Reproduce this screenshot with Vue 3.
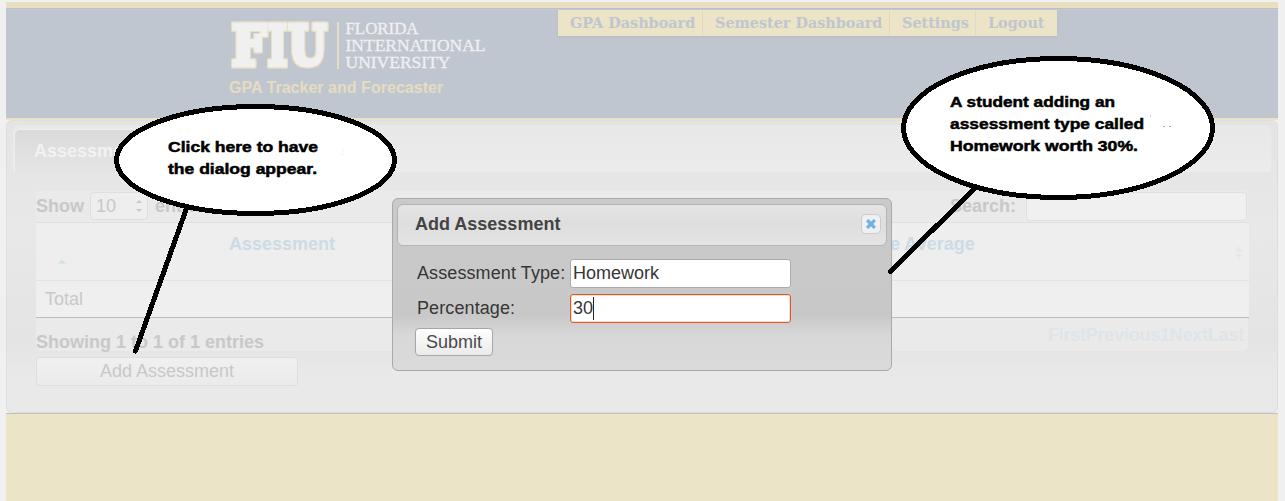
<script setup>
const nav = [
  { label: 'GPA Dashboard', cls: 'n1' },
  { label: 'Semester Dashboard', cls: 'n2' },
  { label: 'Settings', cls: 'n3' },
  { label: 'Logout', cls: 'n4' },
]
const pages = ['First', 'Previous', '1', 'Next', 'Last']
</script>

<template>
  <div class="page">
    <div class="gold-bar"></div>
    <header class="header">
      <div class="brand">
        <svg class="logo" width="262" height="54" viewBox="0 0 262 54">
          <g class="fiu">
            <text x="5" y="46" textLength="34" lengthAdjust="spacingAndGlyphs">F</text>
            <text x="41" y="46" textLength="19" lengthAdjust="spacingAndGlyphs">I</text>
            <text x="61.500" y="46" textLength="38" lengthAdjust="spacingAndGlyphs">U</text>
          </g>
          <rect x="110" y="3" width="2" height="47" fill="#e7dfc2" />
          <g class="uni">
            <text x="118.500" y="15" textLength="73" lengthAdjust="spacingAndGlyphs">FLORIDA</text>
            <text x="118.500" y="32" textLength="140" lengthAdjust="spacingAndGlyphs">INTERNATIONAL</text>
            <text x="118.500" y="49" textLength="105" lengthAdjust="spacingAndGlyphs">UNIVERSITY</text>
          </g>
        </svg>
        <div class="tagline">GPA Tracker and Forecaster</div>
      </div>
      <nav class="nav">
        <a v-for="n in nav" :key="n.label" :class="n.cls">{{ n.label }}</a>
      </nav>
    </header>

    <main class="panel">
      <div class="tabs"><div class="tab">Assessments</div></div>
      <section class="table">
        <div class="toolbar">
          <div class="show">
            <span>Show</span>
            <span class="select">10
              <svg width="8" height="14" viewBox="0 0 8 14"><path d="M1 4L4 1L7 4ZM1 10L4 13L7 10Z" fill="#c8c8c8" /></svg>
            </span>
            <span>entries</span>
          </div>
          <div class="search"><span>Search:</span><div class="search-box"></div></div>
        </div>
        <div class="thead">
          <div class="th first">Assessment
            <svg class="sort" width="8" height="5" viewBox="0 0 8 5"><path d="M0 4.500L4 0.500L8 4.500Z" fill="#d0e0e9" /></svg>
          </div>
          <div class="th last">Grade Average
            <svg class="sort" width="8" height="14" viewBox="0 0 8 14"><path d="M0 6L4 0L8 6ZM0 8L4 14L8 8Z" fill="#e8e8e8" /></svg>
          </div>
        </div>
        <div class="row">Total</div>
        <div class="tfoot">
          <span>Showing 1 to 1 of 1 entries</span>
          <div class="pages"><span v-for="p in pages" :key="p">{{ p }}</span></div>
        </div>
      </section>
      <div class="add">Add Assessment</div>
    </main>
    <footer class="footer"></footer>

    <div class="dialog">
      <div class="title">
        <span>Add Assessment</span>
        <span class="close">
          <svg width="10" height="10" viewBox="0 0 10 10"><path d="M2.200 2.200L7.800 7.800M7.800 2.200L2.200 7.800" stroke="#6fb1e2" stroke-width="3.200" stroke-linecap="square" /></svg>
        </span>
      </div>
      <div class="form">
        <label>Assessment Type:</label><div class="field">Homework</div>
        <label>Percentage:</label><div class="field focus">30<i class="caret"></i></div>
      </div>
      <div class="submit">Submit</div>
    </div>

    <svg class="notes" width="1285" height="501" viewBox="0 0 1285 501">
      <g fill="#fff" stroke="#000" stroke-width="5" stroke-linecap="round" shape-rendering="crispEdges">
        <path d="M187 207L135.500 351M976 187L890.500 271.500" />
        <ellipse cx="255.500" cy="160" rx="139" ry="53.500" />
        <ellipse cx="1058" cy="128" rx="154.500" ry="69.500" />
      </g>
      <g class="note-text">
        <text x="168" y="152" textLength="150" lengthAdjust="spacingAndGlyphs">Click here to have</text>
        <text x="168" y="174" textLength="149" lengthAdjust="spacingAndGlyphs">the dialog appear.</text>
        <text x="950" y="107" textLength="165" lengthAdjust="spacingAndGlyphs">A student adding an</text>
        <text x="950" y="129" textLength="194" lengthAdjust="spacingAndGlyphs">assessment type called</text>
        <text x="950" y="151" textLength="188" lengthAdjust="spacingAndGlyphs">Homework worth 30%.</text>
      </g>
      <path d="M1163 126.500h2M1169 126.500h2M1150 115.500h1" stroke="#aaa" />
      <path d="M342 150.500h2M341 154.500h2" stroke="#eee" />
    </svg>
  </div>
</template>

<style>
body { background: #f0f0f0; overflow: hidden; }
</style>
<style scoped>
* { box-sizing: border-box; }
.page { position: relative; width: 1285px; height: 501px; padding: 2px 7px 0 6px; overflow: hidden; display: flex; flex-direction: column; background: #f0f0f0; font: 18px/20px "Liberation Sans", Arial, sans-serif; color: #c8c8c8; }
.gold-bar { height: 6px; background: #e8dfc0; flex: none; }
.header { height: 112px; flex: none; display: flex; align-items: flex-start; border-top: 1px solid #b9bfca; border-bottom: 2px solid #ece3c5; background: #c0c6cf; box-shadow: inset 0 1px #c8cbd2; }
.brand { width: 552px; padding: 10px 0 0 221px; }
.logo { display: block; }
.fiu { font: bold 54px "DejaVu Serif", serif; fill: #f0f0f0; stroke: #f0f0f0; stroke-width: 4.500; stroke-linejoin: miter; filter: drop-shadow(1px 0 0 #e7dfc2) drop-shadow(-1px 0 0 #e7dfc2) drop-shadow(0 1px 0 #e7dfc2) drop-shadow(0 -1px 0 #e7dfc2); }
.uni { font: 17.500px "Liberation Serif", serif; fill: #f0f0f0; stroke: #f0f0f0; stroke-width: .3; }
.tagline { padding-left: 2px; margin-top: 6px; font-size: 16px; line-height: 18px; font-weight: bold; letter-spacing: .03px; color: #e5dcc1; white-space: nowrap; }
.nav { display: flex; height: 26px; margin-top: 1px; background: #ebe4c6; box-shadow: 0 1px 2px #b4b9c1; font: bold 14.400px/26px "DejaVu Serif", serif; color: #c0c6ce; }
.nav a { padding-left: 12px; border-right: 1px solid #e2dac0; white-space: nowrap; }
.nav .n1 { width: 145px; }
.nav .n2 { width: 187px; }
.nav .n3 { width: 86px; }
.nav .n4 { width: 81px; border: 0; }
.panel { height: 293px; flex: none; padding: 4px 5px; border: 1px solid #dedee0; border-radius: 6px; background: linear-gradient(#e4e4e4 0, #e8e8e8 110px, #e4e4e4 220px, #e9e9e9 255px); }
.tabs { height: 48px; padding: 3px 0 0 1px; border: 1px solid #e7e7e7; border-radius: 6px; background: linear-gradient(#e8e8e8, #eaeaea 60%, #ececec); }
.tab { width: 140px; height: 44px; padding: 11px 0 0 19px; border: 1px solid #eee; border-bottom: 0; border-radius: 6px 6px 0 0; background: linear-gradient(#dadada, #e5e5e5); color: #f2f2f2; font-weight: bold; }
.table { width: 1213px; margin: 17px 0 0 24px; }
.toolbar { height: 33px; display: flex; justify-content: space-between; border: 1px solid #e8e8e8; border-left-width: 0; border-bottom-color: #e0e0e0; border-radius: 6px 6px 0 0; background: #eaeaea; font-weight: bold; }
.show, .search { display: flex; align-items: center; height: 30px; }
.select { display: flex; align-items: center; justify-content: space-between; width: 58px; height: 28px; margin: 0 7px 0 6px; padding: 0 4px 0 5px; border: 1px solid #dfdfdf; border-radius: 4px; background: #eee; font-weight: normal; }
.search { gap: 10px; }
.search-box { width: 221px; height: 29px; border: 1px solid #dfdfdf; border-radius: 4px; background: #f0f0f0; margin-right: 1px; }
.thead { height: 58px; display: flex; border-bottom: 1px solid #e2e2e2; background: #eee; color: #ccdbe5; font-weight: bold; }
.th { position: relative; padding-top: 11px; text-align: center; }
.first { width: 492px; }
.last { width: 721px; text-align: left; padding-left: 320px; }
.sort { position: absolute; left: 22px; top: 36px; }
.last .sort { left: auto; right: 6px; top: 23px; }
.row { height: 37px; padding: 8px 9px; border-bottom: 1px solid #bdbdbd; background: #efefef; }
.tfoot { height: 34px; display: flex; justify-content: space-between; padding: 14px 4px 0 0; border: 1px solid #e5e5e5; border-width: 0 1px 1px 0; border-radius: 0 0 6px 6px; background: #eaeaea; font-weight: bold; }
.pages { display: flex; margin-top: -7px; letter-spacing: -.23px; color: #dfe4e8; }
.add { width: 262px; height: 29px; margin: 5px 0 0 24px; line-height: 27px; text-align: center; border: 1px solid #dedede; border-radius: 4px; background: linear-gradient(#f0f0f0, #ebebeb); }
.footer { flex: 1; border-top: 1px solid #c0c0c2; background: #ebe4c7; }
.dialog { position: absolute; left: 392px; top: 198px; width: 500px; height: 173px; padding: 5px 4px; border: 1px solid #a9a9a9; border-radius: 6px; background: linear-gradient(#cacaca 0, #c8c8c8 116px, #d8d8d8 137px, #dadada); color: #363636; }
.title { display: flex; height: 42px; align-items: center; justify-content: space-between; padding: 0 5px 2px 17px; border: 1px solid #b4b4b4; border-radius: 6px; background: linear-gradient(#e4e4e4, #dedede 50%, #e4e4e4); font-weight: bold; color: #444; }
.close { display: flex; align-items: center; justify-content: center; width: 20px; height: 20px; border: 1px solid #ccc; border-radius: 5px; background: #f0f0f0; }
.form { display: grid; grid-template-columns: 153px 221px; row-gap: 6px; padding: 13px 0 0 20px; line-height: 29px; }
.form label { letter-spacing: .1px; }
.field { display: flex; align-items: center; height: 29px; padding: 0 2px 1px; border: 1px solid #aaa; border-radius: 3px; background: #fff; }
.focus { border-color: #dc5a28; box-shadow: inset 0 0 0 1px #f6ddd1; }
.caret { width: 1px; height: 23px; background: #222; }
.submit { width: 78px; height: 28px; margin: 5px 0 0 18px; border: 1px solid #a6a6a6; border-radius: 4px; background: linear-gradient(#fff, #eaeaea); text-align: center; line-height: 26px; color: #4a4a4a; }
.notes { position: absolute; left: 0; top: 0; }
.note-text { font: bold 15px "Liberation Sans", Arial, sans-serif; fill: #000; stroke: #000; stroke-width: .5; }
</style>
